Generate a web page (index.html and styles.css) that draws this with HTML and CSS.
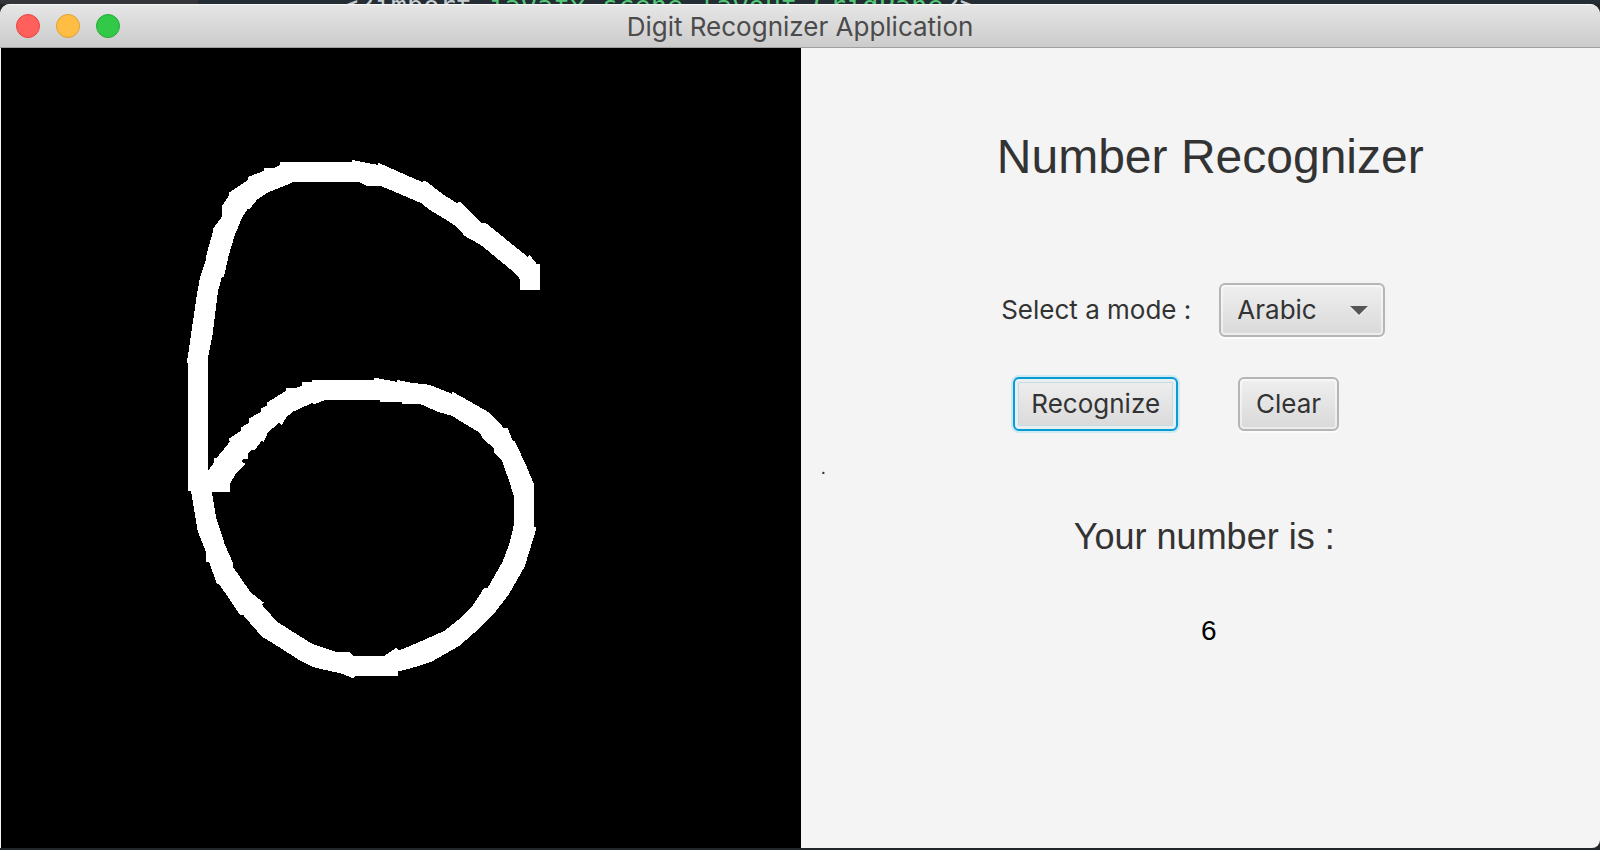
FILE: index.html
```html
<!DOCTYPE html>
<html lang="en">
<head>
<meta charset="utf-8">
<title>Digit Recognizer Application</title>
<link rel="stylesheet" href="styles.css">
</head>
<body>
<div class="editor"><pre class="code"><span class="punct">&lt;?import </span><span class="name">javafx.scene.layout.GridPane</span><span class="punct">?&gt;</span></pre></div>
<div class="window">
  <header class="titlebar">
    <div class="lights">
      <button class="light close" aria-label="Close"></button>
      <button class="light minimize" aria-label="Minimize"></button>
      <button class="light zoom" aria-label="Zoom"></button>
    </div>
    <div class="caption">Digit Recognizer Application</div>
  </header>
  <main class="content">
    <svg class="canvas" viewBox="1 48 800 800" role="img" aria-label="Drawing area" shape-rendering="crispEdges">
      <rect x="1" y="48" width="800" height="800" fill="#000"/>
      <path fill="#fff" fill-rule="evenodd" d="M520 290V279L515 273L481 245L463 235V233L453 224L430 210L421 203L381 186H367L359 182H294L277 189L267 193L257 200L250 209H248L243 216L235 235L229 255L224 277H222L218 292L213 333L208 358V471L214 463V458H217L230 442L229 439L241 431V428L249 423V419L261 412V409L267 406V403L286 391V388H296L302 386V382H312V380H374L375 378L397 382V380L412 383L430 385L452 394L453 392L490 413L504 428H508L513 441H515L527 467L534 484V527L537 528L525 567L509 595L495 613L477 631L460 646L432 662L417 667L398 672V676H356L354 679L342 674L315 668L302 662L272 643L262 637L243 615H240L219 584H217L209 562H206V552L198 532L191 491H188V363H187L197 295L200 278L206 260V257L213 232V229L222 217V206L229 196V193L248 180V177L264 171V168H274L280 165V162H352V160L378 165L379 163L422 182L426 181L444 195L457 203L461 202L482 223L486 223L528 257L530 255L537 264H540V290ZM212 492H230V484L236 474L246 464L242 462V460L248 459V454L252 450L255 450L262 441L264 442L268 433L279 423L282 425L287 417L293 412L313 403V405L326 400H380V402H402V404H420L438 412L452 416L480 433L483 439L494 448V452L502 460L510 483L514 496V526L510 543L503 562L488 588L484 589L473 606L460 619L445 631L418 643L399 651L397 648L385 656H353L350 652H336L312 644L277 622L262 605L264 603L251 593L233 567V563L225 545L216 517Z"/>
    </svg>
    <section class="panel">
      <h1 class="heading">Number Recognizer</h1>
      <div class="mode">
        <label for="mode">Select a mode :</label>
        <div class="combo">
          <select id="mode" class="control"><option>Arabic</option></select>
          <svg class="arrow" viewBox="0 0 18 10" aria-hidden="true"><path d="M0 1H18L9 10Z" fill="#fff"/><path d="M0 0H18L9 9Z" fill="#565656"/></svg>
        </div>
      </div>
      <div class="actions">
        <button class="control focused">Recognize</button>
        <button class="control">Clear</button>
      </div>
      <p class="status">.</p>
      <h2 class="result-title">Your number is :</h2>
      <output class="result">6</output>
    </section>
  </main>
</div>
</body>
</html>
```
FILE: styles.css
```css
* { box-sizing: border-box; }
body {
  margin: 0;
  min-height: 100vh;
  display: flex;
  flex-direction: column;
  background: #22262b;
  color: #333;
  font-family: Inter, "Liberation Sans", sans-serif;
  font-size: 26px;
}
.editor {
  height: 4px;
  overflow: hidden;
  display: flex;
  align-items: flex-start;
  padding-left: 342px;
  background: linear-gradient(to right, #35363a 198px, #232d33 198px);
}
.code {
  margin: 0;
  font: 27px/12px "DejaVu Sans Mono", monospace;
}
.punct { color: #c5ccd0; }
.name { color: #55c878; }
.window {
  flex: 1;
  display: flex;
  flex-direction: column;
  margin-bottom: 2px;
  border-radius: 10px 10px 8px 0;
  overflow: hidden;
  background: #f4f4f4;
}
.titlebar {
  display: grid;
  grid-template-columns: 1fr auto 1fr;
  align-items: center;
  height: 44px;
  padding: 0 16px;
  border-top: 1px solid #f7f7f7;
  border-bottom: 1px solid #a0a0a0;
  background: linear-gradient(#e6e6e6, #cbcbcb);
}
.lights { display: flex; gap: 16px; }
.light {
  width: 24px;
  height: 24px;
  padding: 0;
  border: 1px solid;
  border-radius: 50%;
}
.close { background: #ff605c; border-color: #e2463f; }
.minimize { background: #ffbd44; border-color: #dfa033; }
.zoom { background: #33c948; border-color: #25aa35; }
.caption { padding-top: 2px; color: #4b4b4b; line-height: 32px; }
.content {
  flex: 1;
  display: grid;
  grid-template-columns: 1fr 1fr;
  padding-left: 1px;
}
.canvas { display: block; width: 100%; }
.panel {
  display: flex;
  flex-direction: column;
  align-items: center;
  padding: 81px 0 0 20px;
}
.heading, .result-title, .result, .status {
  margin: 0;
  font-family: "Liberation Sans", Arial, sans-serif;
  font-weight: 400;
}
.heading { font-size: 48px; line-height: 56px; }
.mode {
  display: flex;
  align-items: center;
  gap: 28px;
  margin-top: 98px;
  margin-right: 34px;
}
.mode label { padding-bottom: 2px; }
.combo { position: relative; }
.control {
  height: 54px;
  padding: 0 16px 2px;
  border: 2px solid #b5b5b5;
  border-radius: 6px;
  background: linear-gradient(#efefef, #d9d9d9);
  box-shadow: inset 0 0 0 2px rgba(255, 255, 255, .5), 0 2px 0 #fbfbfb;
  color: #333;
  font: inherit;
}
select.control { width: 166px; appearance: none; }
.arrow {
  position: absolute;
  right: 17px;
  top: 23px;
  width: 18px;
  height: 10px;
  pointer-events: none;
}
.actions {
  display: flex;
  gap: 60px;
  margin-top: 40px;
  margin-right: 68px;
}
.focused {
  border-color: #039ed3;
  box-shadow: 0 0 0 2px #cfe8f1, inset 0 0 0 3px #e9eef0, inset 0 0 0 4px #c3dde6;
}
.status {
  align-self: flex-start;
  margin-top: 24px;
  font-size: 20px;
  line-height: 24px;
}
.result-title {
  margin: 36px 12px 0 0;
  font-size: 36px;
  line-height: 44px;
}
.result {
  margin: 56px 3px 0 0;
  font-size: 28px;
  line-height: 32px;
  color: #000;
}
```
